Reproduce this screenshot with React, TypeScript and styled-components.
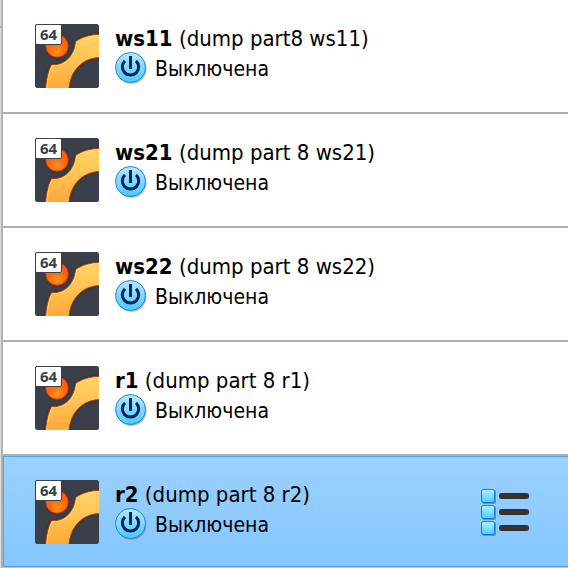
import React from "react";
import styled, { createGlobalStyle } from "styled-components";

const GlobalStyle = createGlobalStyle`
  *, *::before, *::after { box-sizing: border-box; }
  html, body { margin: 0; background: #fff; }
  body { font-family: "DejaVu Sans Condensed", "DejaVu Sans", sans-serif; color: #000; }
`;

const Shell = styled.div`
  display: grid;
  grid-template-columns: 1px 2px minmax(0, 1fr);
  min-height: 100vh;
`;

const OuterPane = styled.div`
  padding-top: 26px;
  background: #dedede;
  &::before { content: ""; display: block; height: 2px; background: #b0b0b0; }
`;

const Splitter = styled.div`
  background: #b0b0b0;
`;

const MachineList = styled.ul`
  margin: 0;
  padding: 0;
  list-style: none;
  background: #9bd1ff;
`;

const MachineRow = styled.li<{ $selected: boolean }>`
  display: flex;
  align-items: center;
  gap: 16px;
  padding: ${(p) => (p.$selected ? "24px 39px 23px 32px" : "24px 39px 24px 32px")};
  border-bottom: ${(p) => (p.$selected ? "0" : "2px solid #b0b0b0")};
  background: ${(p) => (p.$selected ? "linear-gradient(#9bd1ff, #84c6ff)" : "#fff")};
  box-shadow: ${(p) =>
    p.$selected ? "inset 0 1px #3fa9fb, inset 1px 0 #3fa9fb, inset 0 -1px #3fa9fb" : "none"};
`;

const OsIcon = styled.svg`
  flex: none;
  width: 64px;
  height: 64px;
`;

const Details = styled.div`
  flex: 1;
  min-width: 0;
  padding: 2px 0 4px;
`;

const Title = styled.div`
  font-size: 22px;
  line-height: 26px;
  white-space: nowrap;
`;

const Name = styled.strong`
  font-weight: 700;
`;

const Status = styled.div`
  display: flex;
  align-items: center;
  gap: 8px;
  font-size: 21px;
`;

const StatusText = styled.span`
  padding-top: 2px;
  line-height: 30px;
`;

const PowerGlyph = styled.svg`
  flex: none;
  width: 32px;
  height: 32px;
`;

const MenuButton = styled.button`
  flex: none;
  display: flex;
  padding: 0;
  border: 0;
  background: none;
  cursor: pointer;
`;

function MachineIcon({ id }: { id: string }) {
  const ring = `ring-${id}`;
  const ball = `ball-${id}`;
  const clip = `clip-${id}`;
  const soft = `soft-${id}`;
  return (
    <OsIcon viewBox="0 0 64 64" role="img" aria-label="64">
      <defs>
        <linearGradient id={ring} x1="0" y1="0" x2="0" y2="1">
          <stop offset="0" stopColor="#ffd465" />
          <stop offset="0.5" stopColor="#ffc252" />
          <stop offset="1" stopColor="#ffa637" />
        </linearGradient>
        <radialGradient id={ball} cx="0.5" cy="0.75" r="0.7">
          <stop offset="0" stopColor="#ff9420" />
          <stop offset="0.5" stopColor="#ff6a0a" />
          <stop offset="1" stopColor="#ff5a10" />
        </radialGradient>
        <clipPath id={clip}>
          <rect width="64" height="64" rx="2.5" />
        </clipPath>
        <filter id={soft} x="-20%" y="-20%" width="140%" height="140%" colorInterpolationFilters="sRGB">
          <feDropShadow dx="0" dy="0" stdDeviation="1" floodColor="#16181e" floodOpacity="0.6" />
        </filter>
      </defs>
      <g clipPath={`url(#${clip})`}>
        <rect width="64" height="64" fill="#3b3f4a" />
        <circle cx="22" cy="22" r="11.3" fill={`url(#${ball})`} stroke="#c83a05" filter={`url(#${soft})`} />
        <path
          d="M10.5 66C11 56 13 47 16.5 40.5C27 42 39 34 40.5 17.5C47 13 55 10.5 66 10.3V33.5C48 33.5 35 46 34 66Z"
          fill={`url(#${ring})`}
          stroke="#b83c08"
          strokeLinejoin="round"
          filter={`url(#${soft})`}
        />
        <path
          d="M12 64C12.5 55 14.5 47 17.3 41.7C29 42.5 40 34 41.7 18.3C48 14 56 11.8 64 11.6"
          fill="none"
          stroke="#ffe071"
          strokeWidth="0.8"
        />
      </g>
      <rect x="0.5" y="0.5" width="26" height="20" rx="1.5" fill="#fff" stroke="#3b3f4a" />
      <text
        x="13.5"
        y="16"
        textAnchor="middle"
        fontFamily="Open Sans, Noto Sans, sans-serif"
        fontSize="15"
        fontWeight="700"
        fill="#3b3f4a"
      >
        64
      </text>
    </OsIcon>
  );
}

function PowerIcon({ id }: { id: string }) {
  const fill = `power-${id}`;
  return (
    <PowerGlyph viewBox="0 0 32 32" aria-hidden="true">
      <defs>
        <linearGradient id={fill} x1="0" y1="0" x2="0" y2="1">
          <stop offset="0" stopColor="#b2eaff" />
          <stop offset="1" stopColor="#49caff" />
        </linearGradient>
      </defs>
      <circle cx="16.5" cy="16.8" r="15" fill="#6d7f91" opacity="0.55" />
      <circle cx="15.5" cy="15.5" r="15" fill={`url(#${fill})`} stroke="#2781d3" />
      <path d="M10 8.8A8.2 8.2 0 1 0 21 8.8" fill="none" stroke="#07245b" strokeWidth="3" />
      <path d="M15.5 4V17" stroke="#07245b" strokeWidth="3" />
    </PowerGlyph>
  );
}

function ToolsIcon() {
  return (
    <svg width="48" height="48" viewBox="0 0 48 48" aria-hidden="true">
      <defs>
        <linearGradient id="tool-box" x1="0" y1="0" x2="0" y2="1">
          <stop offset="0" stopColor="#b3f2ff" />
          <stop offset="1" stopColor="#43ccff" />
        </linearGradient>
      </defs>
      {[1, 17, 33].map((y) => (
        <g key={y}>
          <rect x="1" y={y + 1} width="14" height="14" rx="2" fill="#5c7590" opacity="0.7" />
          <rect x="0.5" y={y + 0.5} width="13" height="13" rx="2" fill="url(#tool-box)" stroke="#1373d6" />
          <rect x="18" y={y + 4} width="30" height="6" rx="2.5" fill="#333" />
        </g>
      ))}
    </svg>
  );
}

const machines = [
  { id: "ws11", snapshot: "dump part8 ws11" },
  { id: "ws21", snapshot: "dump part 8 ws21" },
  { id: "ws22", snapshot: "dump part 8 ws22" },
  { id: "r1", snapshot: "dump part 8 r1" },
  { id: "r2", snapshot: "dump part 8 r2", selected: true },
];

export default function App() {
  return (
    <>
      <GlobalStyle />
      <Shell>
        <OuterPane />
        <Splitter />
        <MachineList>
          {machines.map((m) => (
            <MachineRow key={m.id} $selected={Boolean(m.selected)}>
              <MachineIcon id={m.id} />
              <Details>
                <Title>
                  <Name>{m.id}</Name> ({m.snapshot})
                </Title>
                <Status>
                  <PowerIcon id={m.id} />
                  <StatusText>Выключена</StatusText>
                </Status>
              </Details>
              {m.selected && (
                <MenuButton type="button" aria-label="Меню">
                  <ToolsIcon />
                </MenuButton>
              )}
            </MachineRow>
          ))}
        </MachineList>
      </Shell>
    </>
  );
}
